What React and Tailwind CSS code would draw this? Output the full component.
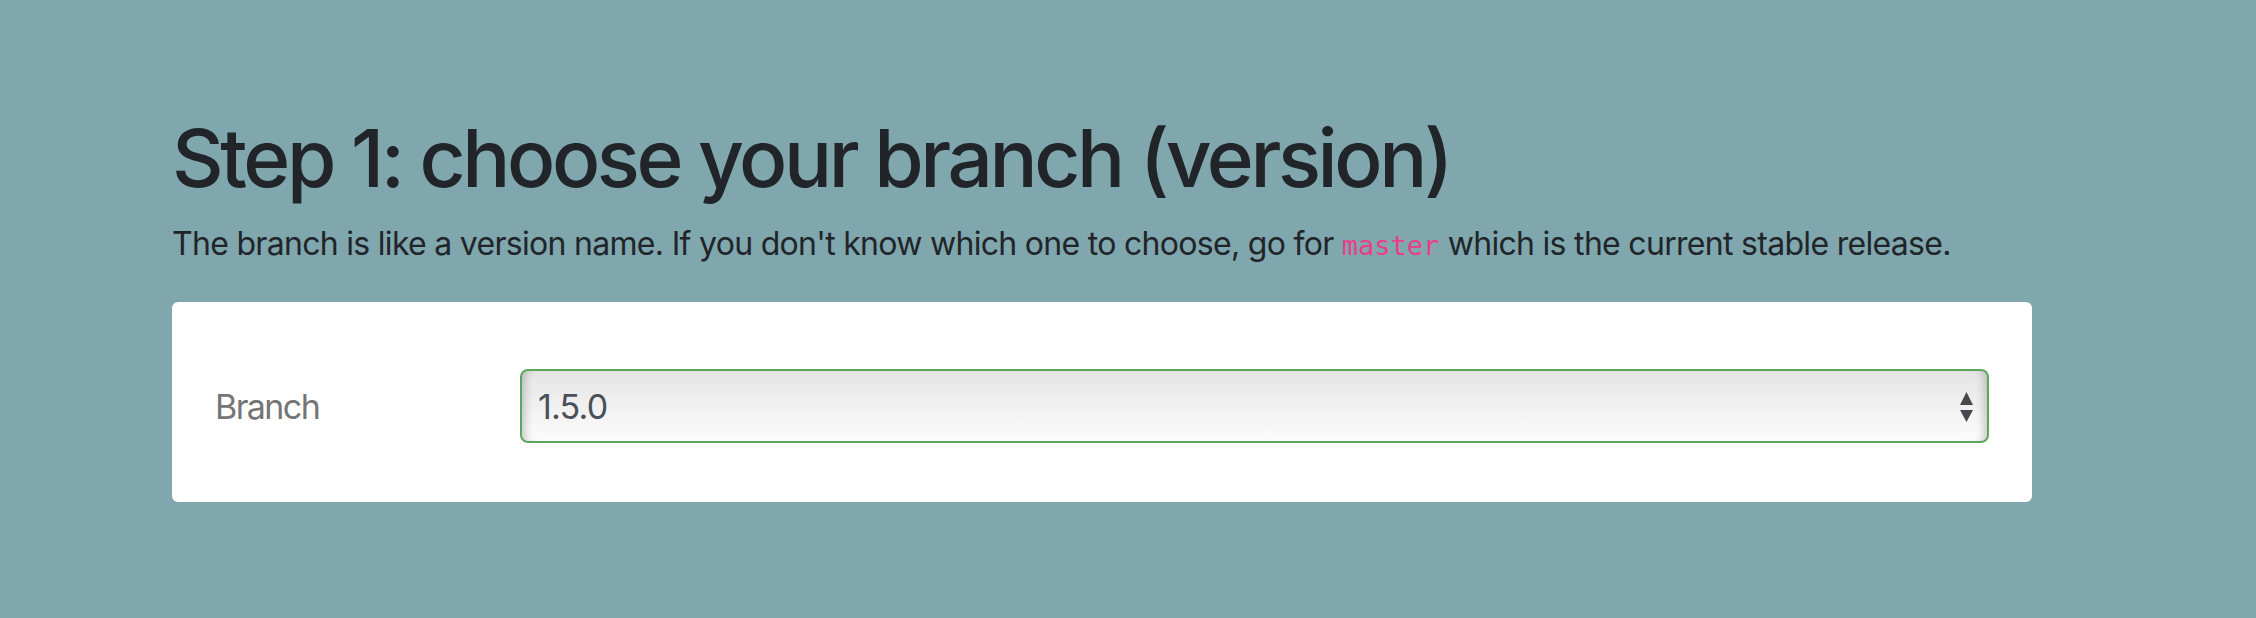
import React from 'react';

export default function App() {
  return (
    <div className="w-[2256px] h-[618px] bg-[#7fa7ad] overflow-hidden" style={{ fontFamily: 'Inter, "Noto Sans", sans-serif' }}>
      <div className="pl-[172px] pt-[110px] w-[2032px]">
        {/* Title and intro */}
        <h1 className="text-[80px] leading-[96px] font-medium text-[#212529] tracking-[-3.4px] whitespace-nowrap">
          Step 1: choose your branch (version)
        </h1>
        <p className="mt-[14px] text-[32px] leading-[48px] text-[#212529] tracking-[-0.7px] whitespace-nowrap">
          The branch is like a version name. If you don't know which one to choose, go for{' '}
          <code className="text-[27px] text-[#e83e8c] tracking-normal" style={{ fontFamily: '"DejaVu Sans Mono", monospace' }}>master</code>{' '}
          which is the current stable release.
        </p>

        {/* Branch picker card */}
        <div className="mt-[32px] bg-white rounded-[6px] pl-[43px] pr-[43px] pt-[67px] pb-[59px] flex items-center">
          <label className="w-[305px] text-[34px] text-[#757575] tracking-[-1.6px]">Branch</label>
          <div className="flex-1 h-[74px] rounded-[8px] border-2 border-[#5ea55e] bg-gradient-to-b from-[#e5e5e5] to-[#fcfcfc] shadow-[inset_10px_0_8px_-7px_rgba(0,0,0,0.2),inset_-10px_0_8px_-7px_rgba(0,0,0,0.2)] flex items-center pl-[16px] pr-[14px]">
            <span className="flex-1 text-[34px] text-[#495057] tracking-[-0.8px]">1.5.0</span>
            <svg width="13" height="30" viewBox="0 0 13 30" className="mt-[2px]">
              <polygon points="6.5,0 13,13 0,13" fill="#45484d" />
              <polygon points="0,18 13,18 6.5,30" fill="#45484d" />
            </svg>
          </div>
        </div>
      </div>
    </div>
  );
}
